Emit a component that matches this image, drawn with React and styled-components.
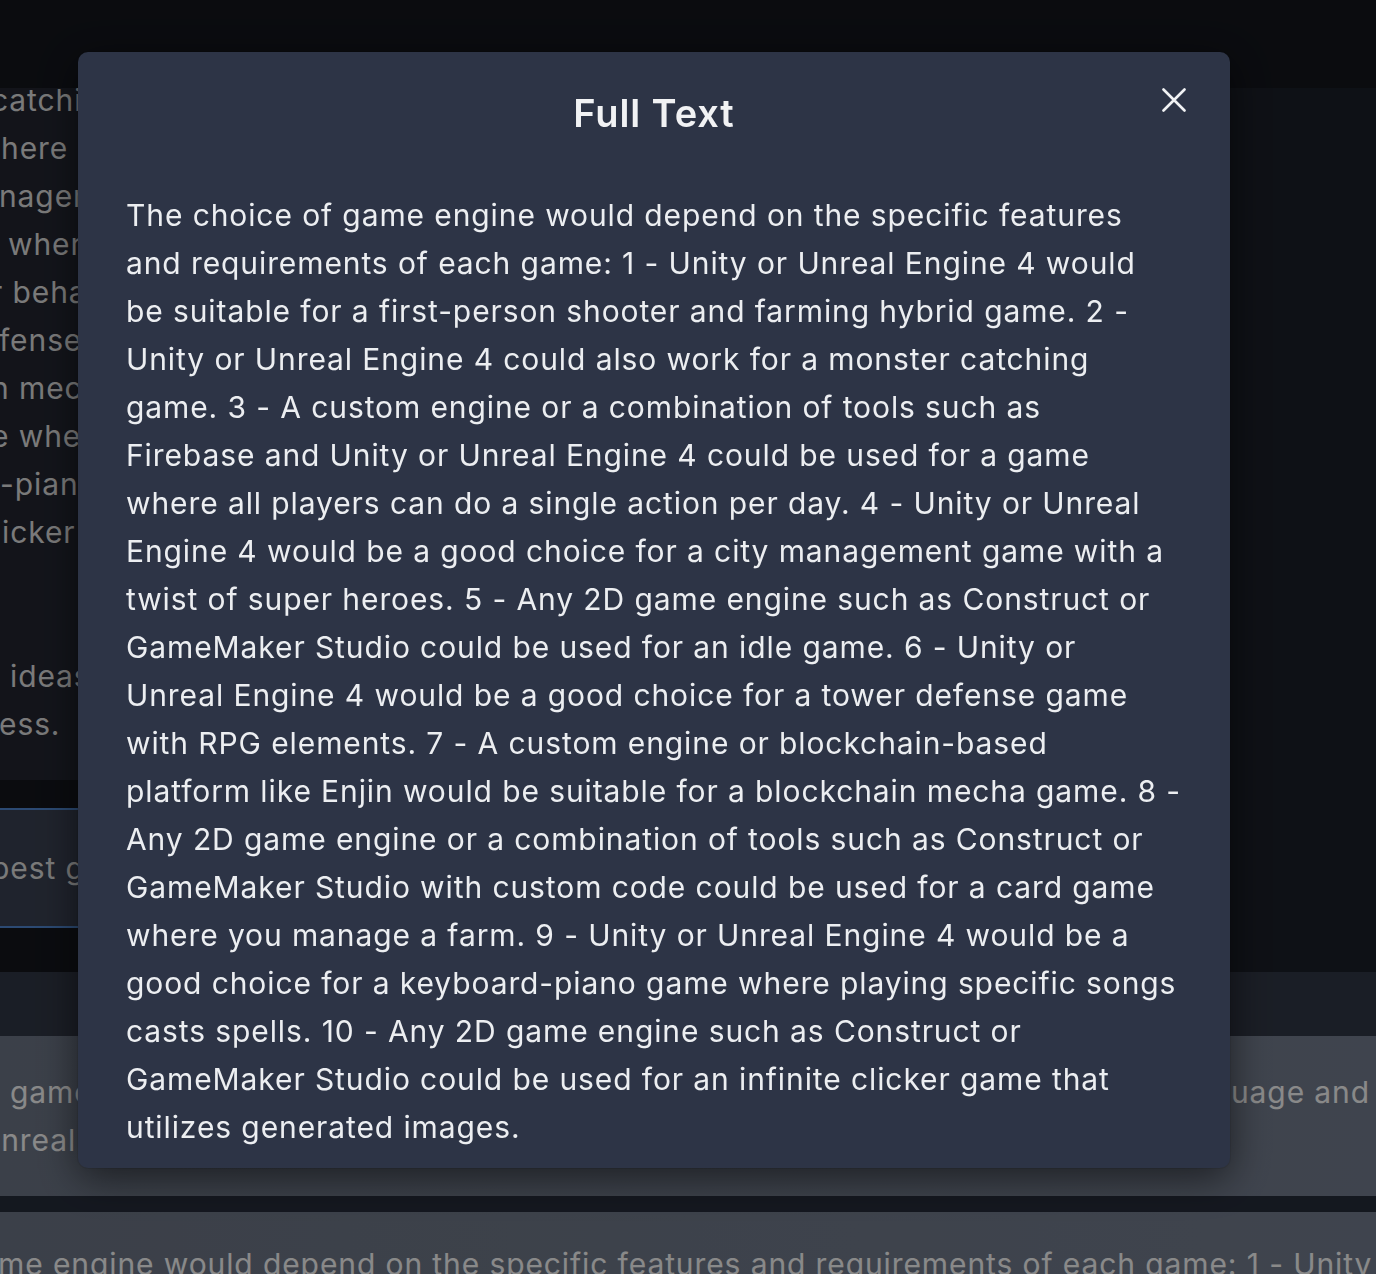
import React from "react";
import styled, { createGlobalStyle } from "styled-components";

const fullTextLines = [
  "The choice of game engine would depend on the specific features",
  "and requirements of each game: 1 - Unity or Unreal Engine 4 would",
  "be suitable for a first-person shooter and farming hybrid game. 2 -",
  "Unity or Unreal Engine 4 could also work for a monster catching",
  "game. 3 - A custom engine or a combination of tools such as",
  "Firebase and Unity or Unreal Engine 4 could be used for a game",
  "where all players can do a single action per day. 4 - Unity or Unreal",
  "Engine 4 would be a good choice for a city management game with a",
  "twist of super heroes. 5 - Any 2D game engine such as Construct or",
  "GameMaker Studio could be used for an idle game. 6 - Unity or",
  "Unreal Engine 4 would be a good choice for a tower defense game",
  "with RPG elements. 7 - A custom engine or blockchain-based",
  "platform like Enjin would be suitable for a blockchain mecha game. 8 -",
  "Any 2D game engine or a combination of tools such as Construct or",
  "GameMaker Studio with custom code could be used for a card game",
  "where you manage a farm. 9 - Unity or Unreal Engine 4 would be a",
  "good choice for a keyboard-piano game where playing specific songs",
  "casts spells. 10 - Any 2D game engine such as Construct or",
  "GameMaker Studio could be used for an infinite clicker game that",
  "utilizes generated images.",
];

const history = [
  { text: "catching game with creatures to collect", lead: -9 },
  { text: "here all players can do a single action per day", lead: 1 },
  { text: "nagement game with a twist of super heroes", lead: -1 },
  { text: "where the heroes keep fighting", lead: 8 },
  { text: "r behavior", lead: -9 },
  { text: "fense game with RPG elements", lead: -1 },
  { text: "n mecha game", lead: -9 },
  { text: "e where you manage a farm", lead: -9 },
  { text: "-piano game where playing specific songs casts spells", lead: 0 },
  { text: "icker game that utilizes generated images", lead: 2 },
  { text: "\u00a0", lead: 0 },
  { text: "\u00a0", lead: 0 },
  { text: "ideas and give me the best engine for", lead: 10 },
  { text: "ess.", lead: -1 },
];

export default function App() {
  return (
    <>
      <GlobalStyle />
      <Page>
        <TopBar />
        <Workspace>
          <ChatColumn>
            <History>
              <HistoryText>
                {history.map((line, i) => (
                  <Line key={i} $lead={line.lead}>
                    {line.text}
                  </Line>
                ))}
              </HistoryText>
            </History>
            <Composer>
              <Line $lead={-9}>best game engine for each of these ideas?</Line>
            </Composer>
          </ChatColumn>
          <Sidebar />
        </Workspace>
        <ResultsBar />
        <ResultsList>
          <ResultCard $pad={32}>
            <SplitLine>
              <Line $lead={10}>game engines to consider</Line>
              <span>language and</span>
            </SplitLine>
            <Line $lead={-22}>Unreal Engine 4</Line>
          </ResultCard>
          <ResultCard $pad={28}>
            <Line $lead={-2}>
              me engine would depend on the specific features and requirements of
              each game: 1 - Unity or Unreal Engine 4 would
            </Line>
          </ResultCard>
        </ResultsList>
      </Page>

      <Overlay />
      <ModalLayer>
        <Modal>
          <ModalHeader>Full Text</ModalHeader>
          <CloseButton aria-label="Close">
            <svg width="24" height="24" viewBox="0 0 24 24" fill="none">
              <path
                d="M1.5 1.5L22.5 22.5M22.5 1.5L1.5 22.5"
                stroke="currentColor"
                strokeWidth="2.6"
                strokeLinecap="round"
              />
            </svg>
          </CloseButton>
          <ModalBody>
            {fullTextLines.map((line, i) => (
              <BodyLine key={i}>{line}</BodyLine>
            ))}
          </ModalBody>
        </Modal>
      </ModalLayer>
    </>
  );
}

const GlobalStyle = createGlobalStyle`
  html, body {
    margin: 0;
    height: 100%;
    overflow: hidden;
    background: #14161d;
  }
  body {
    font-family: Inter, "Noto Sans", sans-serif;
  }
`;

const Page = styled.div`
  height: 1274px;
  display: flex;
  flex-direction: column;
  font-size: 30px;
  line-height: 48px;
  letter-spacing: 0.9px;
  color: #dedede;
  overflow: hidden;
`;

const TopBar = styled.div`
  height: 88px;
  flex-shrink: 0;
  background: #14161d;
`;

const Workspace = styled.div`
  height: 884px;
  flex-shrink: 0;
  display: flex;
`;

const ChatColumn = styled.div`
  width: 1040px;
  margin-left: -24px;
  display: flex;
  flex-direction: column;
  background: #14161d;
`;

const History = styled.div`
  height: 692px;
  padding-left: 24px;
  background: #232631;
  overflow: hidden;
`;

const HistoryText = styled.div`
  margin-top: -12px;
`;

const Line = styled.div`
  margin-left: ${(p) => p.$lead || 0}px;
  white-space: nowrap;
`;

const Composer = styled.div`
  margin-top: 28px;
  height: 116px;
  padding-left: 24px;
  display: flex;
  align-items: center;
  background: #3a4152;
  border-top: 2px solid #5087d1;
  border-bottom: 2px solid #5087d1;
`;

const Sidebar = styled.div`
  flex: 1;
  background: #1b1f28;
`;

const ResultsBar = styled.div`
  height: 64px;
  flex-shrink: 0;
  background: #313745;
`;

const ResultsList = styled.div`
  flex: 1;
  display: flex;
  flex-direction: column;
  gap: 16px;
  background: #262c3a;
`;

const ResultCard = styled.div`
  flex-shrink: 0;
  padding: ${(p) => p.$pad}px 0 32px;
  background: linear-gradient(90deg, #6c7585, #747d8e);
  color: #fafafa;
`;

const SplitLine = styled.div`
  display: flex;
  justify-content: space-between;
  padding-right: 6px;
  white-space: nowrap;
`;

const Overlay = styled.div`
  position: fixed;
  inset: 0;
  background: rgba(0, 0, 0, 0.45);
`;

const ModalLayer = styled.div`
  position: fixed;
  inset: 0;
  padding: 52px 0 0 78px;
  display: flex;
  align-items: flex-start;
`;

const Modal = styled.section`
  position: relative;
  width: 1152px;
  box-sizing: border-box;
  background: #2d3446;
  border-radius: 10px;
  box-shadow: 0 10px 40px rgba(0, 0, 0, 0.55), 0 0 0 1px rgba(0, 0, 0, 0.08);
  color: #eceef1;
`;

const ModalHeader = styled.h2`
  margin: 0;
  padding: 38px 96px 27px;
  text-align: center;
  font-size: 38px;
  line-height: 46px;
  font-weight: 600;
  letter-spacing: 0.9px;
  color: #f1f2f4;
`;

const CloseButton = styled.button`
  position: absolute;
  top: 28px;
  right: 36px;
  width: 40px;
  height: 40px;
  padding: 0;
  border: none;
  background: transparent;
  color: #f1f2f4;
  display: flex;
  align-items: center;
  justify-content: center;
  cursor: pointer;
`;

const ModalBody = styled.div`
  padding: 28px 40px 17px 48px;
  font-size: 30px;
  line-height: 48px;
  letter-spacing: 0.9px;
`;

const BodyLine = styled.div`
  white-space: nowrap;
`;
